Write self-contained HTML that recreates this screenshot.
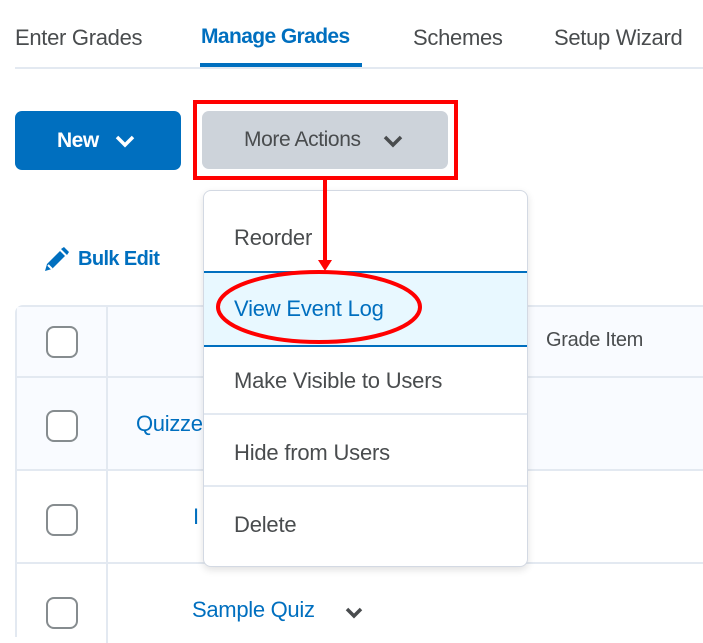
<!DOCTYPE html>
<html style="height:643px;overflow:hidden"><head><style>
body{margin:0;width:703px;height:643px;overflow:hidden;background:#fff;font-family:"Liberation Sans",sans-serif;position:relative}
.a{position:absolute;white-space:nowrap}
.tab{font-size:22px;color:#494c4e;top:25px}
.cb{position:absolute;left:46px;width:28px;height:28px;border:2px solid #868c8f;border-radius:8px;background:#fff}
.hl{position:absolute;left:15px;right:0;height:2px;background:#e3e9f1}
.mi{position:absolute;left:30px;font-size:22px;color:#494c4e;letter-spacing:-0.2px}
.sep{position:absolute;left:0;right:0;height:2px;background:#e3e9f1}
</style></head><body>
<div class="a tab" style="left:15px;letter-spacing:-0.3px">Enter Grades</div>
<div class="a tab" style="left:201px;color:#006fbf;font-weight:bold;font-size:21px;letter-spacing:-0.6px">Manage Grades</div>
<div class="a tab" style="left:413px;letter-spacing:-0.3px">Schemes</div>
<div class="a tab" style="left:554px;letter-spacing:-0.3px">Setup Wizard</div>
<div class="a" style="left:15px;right:0;top:67px;height:2px;background:#e3e9f1"></div>
<div class="a" style="left:200px;width:162px;top:63px;height:4px;background:#006fbf"></div>

<div class="a" style="left:15px;top:111px;width:166px;height:59px;background:#006fbf;border-radius:7px;color:#fff;font-size:21px;font-weight:bold;line-height:59px">
<span style="position:absolute;left:42px;letter-spacing:-0.5px">New</span>
<svg style="position:absolute;left:100px;top:23px" width="20" height="14" viewBox="0 0 20 14"><path d="M2 3l8 8 8-8" stroke="#fff" stroke-width="3.5" fill="none"/></svg></div>
<div class="a" style="left:202px;top:111px;width:246px;height:58px;background:#cdd3da;border-radius:7px;color:#494c4e;font-size:21px;line-height:58px">
<span style="position:absolute;left:42px;letter-spacing:-0.4px">More Actions</span>
<svg style="position:absolute;left:181px;top:23px" width="20" height="14" viewBox="0 0 20 14"><path d="M2 3l8 8 8-8" stroke="#494c4e" stroke-width="3.5" fill="none"/></svg></div>
<div class="a" style="left:193px;top:100px;width:257px;height:72px;border:4px solid #f00"></div>

<svg class="a" style="left:42px;top:246px" width="28" height="28" viewBox="0 0 28 28"><path d="M3 25l2-7 13-13 5 5-13 13z M19 3l3-2 5 5-2 3z" fill="#006fbf"/><path d="M6 19l4 4" stroke="#fff" stroke-width="2"/></svg>
<div class="a" style="left:78px;top:248px;font-size:20px;color:#006fbf;font-weight:bold;letter-spacing:-0.6px">Bulk Edit</div>

<div class="a" style="left:15px;top:305px;width:690px;height:330px;border:2px solid #e3e9f1;border-bottom:none;border-right:none;border-radius:8px 0 0 0"></div>
<div class="a" style="left:17px;top:307px;right:0;height:163px;background:#f9fbff"></div>
<div class="hl" style="top:376px"></div>
<div class="hl" style="top:469px"></div>
<div class="hl" style="top:562px"></div>
<div class="a" style="left:106px;top:307px;width:2px;height:336px;background:#e3e9f1"></div>
<div class="cb" style="top:326px"></div>
<div class="cb" style="top:410px"></div>
<div class="cb" style="top:504px"></div>
<div class="cb" style="top:597px"></div>
<div class="a" style="left:546px;top:329px;font-size:20px;color:#494c4e;letter-spacing:-0.3px">Grade Item</div>
<div class="a" style="left:136px;top:411px;font-size:22px;color:#006fbf;letter-spacing:-0.3px">Quizzes</div>
<div class="a" style="left:193px;top:504px;font-size:22px;color:#006fbf">I</div>
<div class="a" style="left:192px;top:597px;font-size:22px;color:#006fbf;letter-spacing:-0.3px">Sample Quiz</div>
<svg class="a" style="left:344px;top:605px" width="20" height="14" viewBox="0 0 20 14"><path d="M3 4l7 7 7-7" stroke="#494c4e" stroke-width="3.5" fill="none"/></svg>

<div class="a" style="left:203px;top:190px;width:323px;height:375px;background:#fff;border:1px solid #d3d9e3;border-radius:8px;box-shadow:0 3px 8px rgba(0,0,0,.12);overflow:hidden">
<div class="mi" style="top:34px">Reorder</div>
<div class="a" style="left:0;right:0;top:80px;height:72px;background:#e8f8ff;border-top:2px solid #006fbf;border-bottom:2px solid #006fbf"></div>
<div class="mi" style="top:105px;color:#006fbf">View Event Log</div>
<div class="mi" style="top:177px">Make Visible to Users</div>
<div class="sep" style="top:222px"></div>
<div class="mi" style="top:249px">Hide from Users</div>
<div class="sep" style="top:294px"></div>
<div class="mi" style="top:321px">Delete</div>
</div>

<svg class="a" style="left:0;top:0" width="703" height="643">
<line x1="325" y1="176" x2="325" y2="262" stroke="#f00" stroke-width="4"/>
<path d="M318 260h14l-7 11z" fill="#f00"/>
<ellipse cx="319" cy="307" rx="101" ry="35" fill="none" stroke="#f00" stroke-width="4"/>
</svg>
</body></html>
